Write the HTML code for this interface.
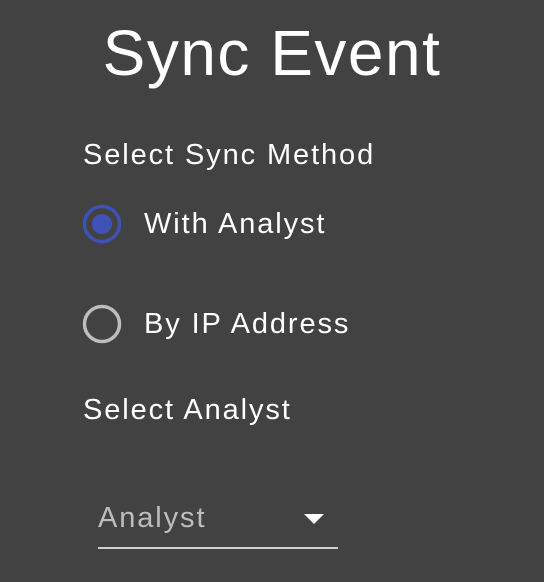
<!DOCTYPE html>
<html><head><style>
body{margin:0;width:544px;height:582px;background:#424242;font-family:"Liberation Sans",sans-serif;color:#fff;position:relative;overflow:hidden}
.t{position:absolute;white-space:nowrap;line-height:1;letter-spacing:1.9px}
</style></head><body>
<div class="t" style="left:0;width:544px;text-align:center;top:21px;font-size:64px;letter-spacing:1.5px">Sync Event</div>
<div class="t" style="left:83px;top:141px;font-size:29px">Select Sync Method</div>
<svg style="position:absolute;left:0;top:0" width="544" height="582">
<circle cx="102" cy="224" r="17.5" fill="none" stroke="#3f51b5" stroke-width="3.5"/>
<circle cx="102" cy="224" r="10" fill="#3f51b5"/>
<circle cx="102" cy="324" r="17.5" fill="none" stroke="#bdbdbd" stroke-width="3.5"/>
<path d="M304 514 L324 514 L314 524 Z" fill="#fff"/>
<rect x="98" y="547" width="240" height="2" fill="#d0d0d0"/>
</svg>
<div class="t" style="left:144px;top:210px;font-size:29px">With Analyst</div>
<div class="t" style="left:144px;top:310px;font-size:29px">By IP Address</div>
<div class="t" style="left:83px;top:396px;font-size:29px">Select Analyst</div>
<div class="t" style="left:98px;top:504px;font-size:29px;color:#bdbdbd">Analyst</div>
</body></html>
